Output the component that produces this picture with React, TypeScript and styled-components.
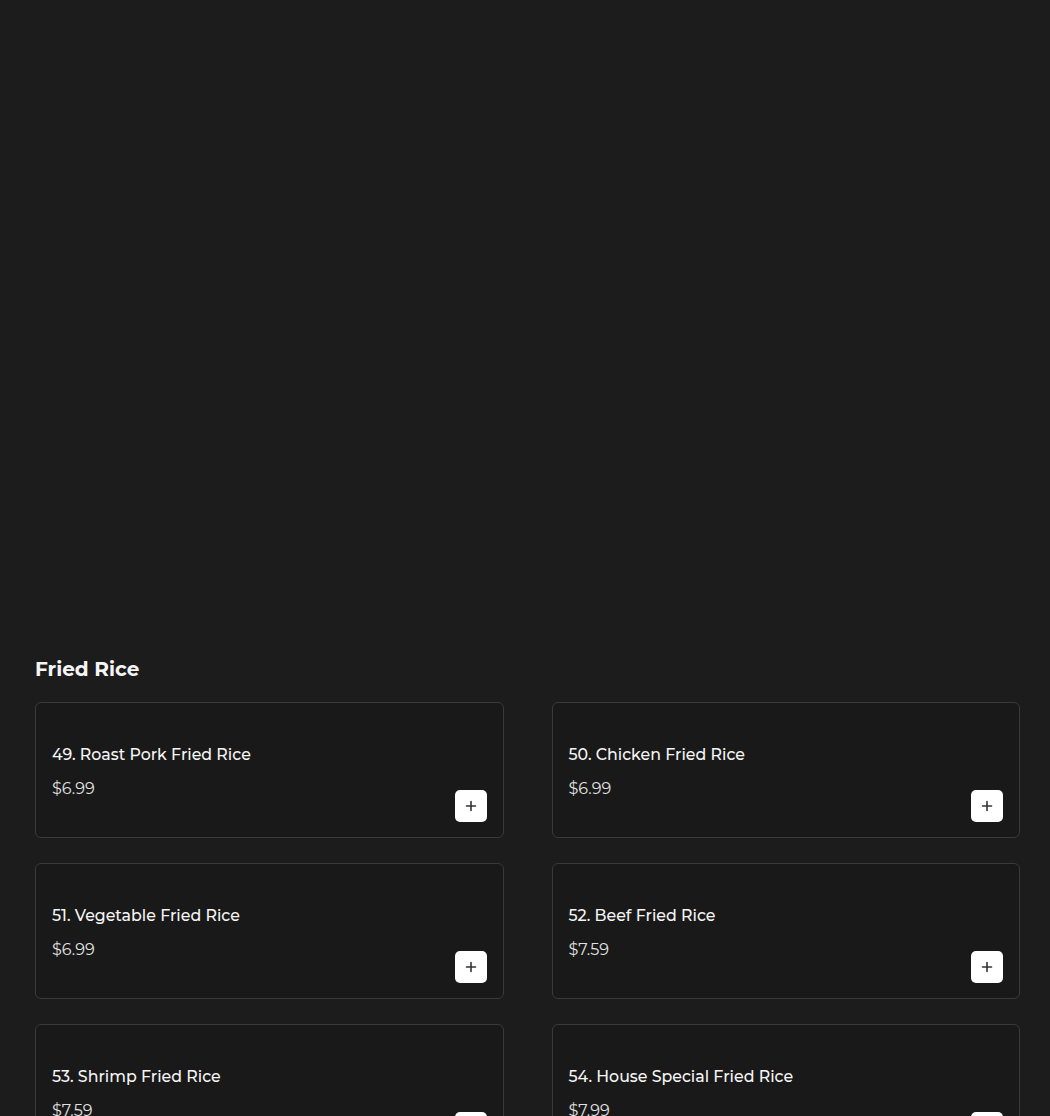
import React from "react";
import styled, { createGlobalStyle } from "styled-components";

const Global = createGlobalStyle`
  html, body { margin: 0; padding: 0; background: #1c1c1c; }
  body { font-family: "Montserrat", "Noto Sans", "Open Sans", sans-serif; color: #f2f2f2; }
  * { box-sizing: border-box; }
`;

const Page = styled.div`
  min-height: 1116px;
  background: #1c1c1c;
  padding: 0 30px 0 35px;
`;

const Hero = styled.div`
  height: 656px;
`;

const Heading = styled.h2`
  margin: 0 0 20px 0;
  font-size: 20px;
  line-height: 26px;
  font-weight: 700;
  color: #f5f5f5;
`;

const Grid = styled.div`
  display: grid;
  grid-template-columns: 1fr 1fr;
  column-gap: 48px;
  row-gap: 25px;
`;

const Card = styled.div`
  height: 136px;
  background: #191919;
  border: 1px solid #3a3a3a;
  border-radius: 6px;
  padding: 41px 16px 15px 16px;
  display: flex;
  justify-content: space-between;
  align-items: flex-end;
`;

const Info = styled.div`
  display: flex;
  flex-direction: column;
  gap: 12px;
  align-self: flex-start;
`;

const Title = styled.div`
  font-size: 15.8px;
  line-height: 22px;
  font-weight: 500;
  color: #f5f5f5;
`;

const Price = styled.div`
  font-size: 16px;
  line-height: 22px;
  font-weight: 400;
  color: #e2e2e2;
`;

const AddButton = styled.button`
  width: 32px;
  height: 32px;
  border: none;
  border-radius: 5px;
  background: #ffffff;
  display: flex;
  align-items: center;
  justify-content: center;
  padding: 0;
  cursor: pointer;
`;

const items = [
  { name: "49. Roast Pork Fried Rice", price: "$6.99" },
  { name: "50. Chicken Fried Rice", price: "$6.99" },
  { name: "51. Vegetable Fried Rice", price: "$6.99" },
  { name: "52. Beef Fried Rice", price: "$7.59" },
  { name: "53. Shrimp Fried Rice", price: "$7.59" },
  { name: "54. House Special Fried Rice", price: "$7.99" },
];

const Plus = () => (
  <svg width="12" height="12" viewBox="0 0 12 12">
    <path d="M6 1.5v9M1.5 6h9" stroke="#333" strokeWidth="1.6" strokeLinecap="round" />
  </svg>
);

export default function App() {
  return (
    <>
      <Global />
      <Page>
        <Hero />
        <Heading>Fried Rice</Heading>
        <Grid>
          {items.map((it) => (
            <Card key={it.name}>
              <Info>
                <Title>{it.name}</Title>
                <Price>{it.price}</Price>
              </Info>
              <AddButton aria-label="Add">
                <Plus />
              </AddButton>
            </Card>
          ))}
        </Grid>
      </Page>
    </>
  );
}
